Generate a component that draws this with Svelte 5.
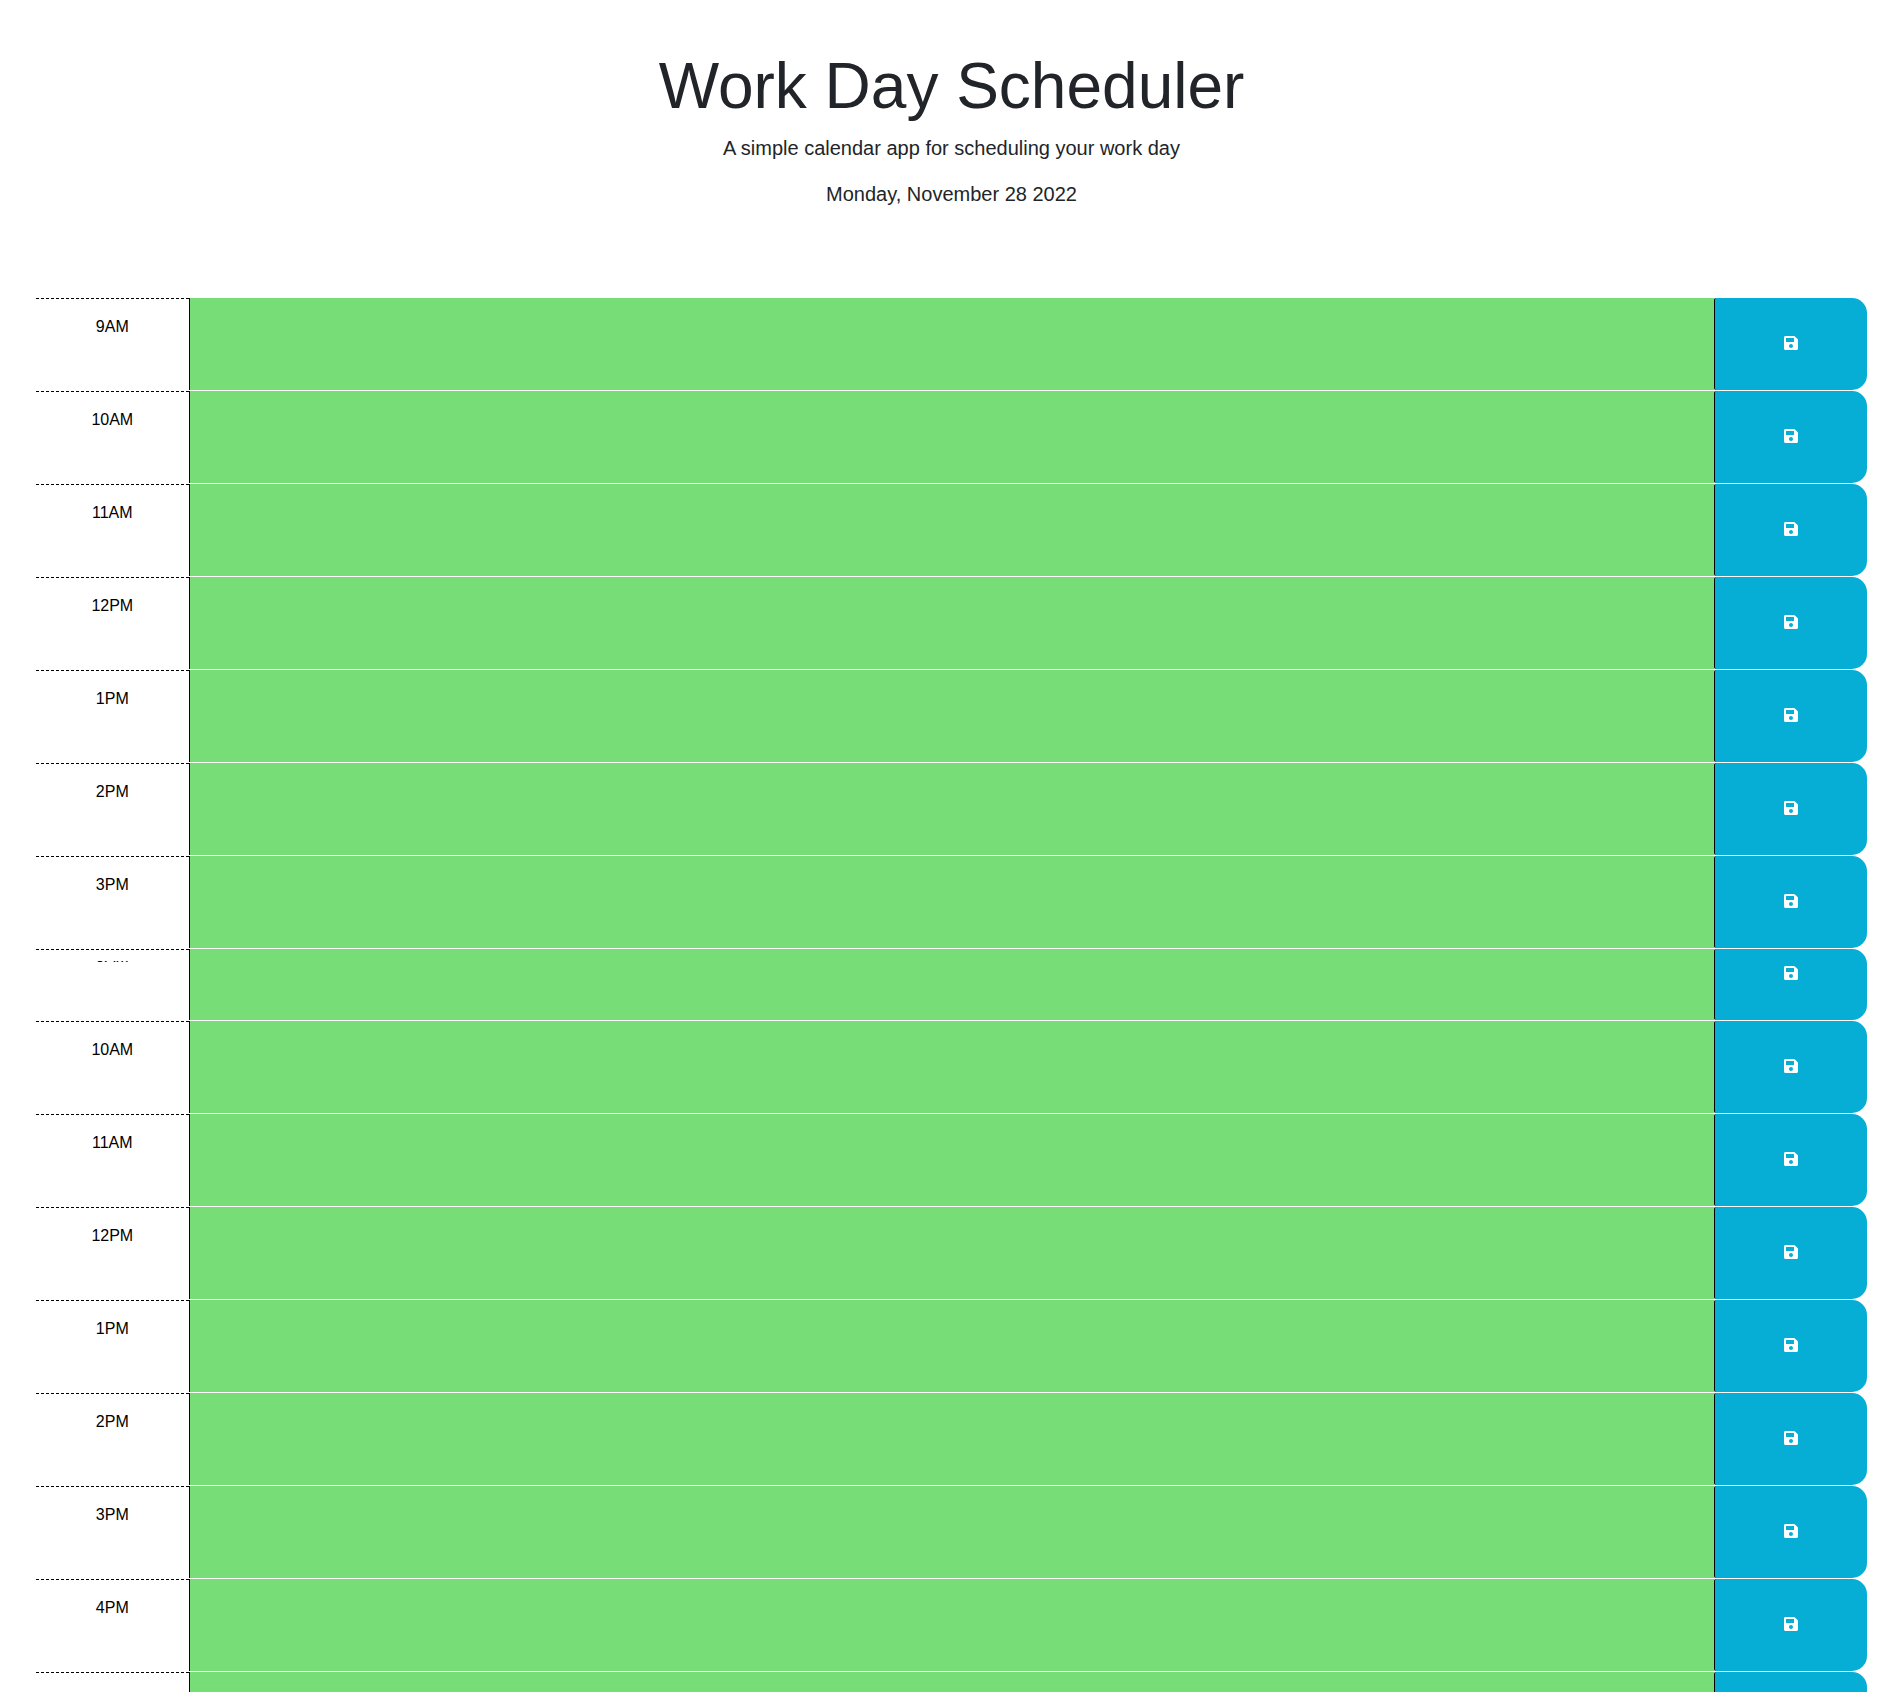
<script>
  const hours = ['9AM', '10AM', '11AM', '12PM', '1PM', '2PM', '3PM'];
  let blocks = $state([
    ...hours.map((label) => ({ label, short: false, text: '' })),
    { label: '9AM', short: true, text: '' },
    ...[...hours.slice(1), '4PM', '5PM'].map((label) => ({ label, short: false, text: '' })),
  ]);
</script>

<header>
  <h1>Work Day Scheduler</h1>
  <p>A simple calendar app for scheduling your work day</p>
  <p>Monday, November 28 2022</p>
</header>

<main>
  {#each blocks as block, i}
    <div class="row" class:short={block.short}>
      <label class="hour" for="slot-{i}"><span>{block.label}</span></label>
      <textarea id="slot-{i}" bind:value={block.text}></textarea>
      <button type="button" aria-label="Save">
        <svg viewBox="0 0 448 448" aria-hidden="true">
          <path
            d="M433.941 97.941l-83.882-83.882A48 48 0 0 0 316.118 0H48C21.49 0 0 21.49 0 48v352c0 26.51 21.49 48 48 48h352c26.51 0 48-21.49 48-48V131.882a48 48 0 0 0-14.059-33.941zM224 384c-35.346 0-64-28.654-64-64s28.654-64 64-64 64 28.654 64 64-28.654 64-64 64zm96-304.52V180c0 6.627-5.373 12-12 12H76c-6.627 0-12-5.373-12-12V76c0-6.627 5.373-12 12-12h228.52c3.183 0 6.235 1.264 8.485 3.515l3.48 3.48A11.996 11.996 0 0 1 320 79.48z"
          />
        </svg>
      </button>
    </div>
  {/each}
</main>

<style>
  :global(body) {
    background: #fff;
    color: #212529;
    font: 16px/24px 'Liberation Sans', Arial, sans-serif;
  }
  :global(#app) {
    height: 100vh;
    overflow: hidden;
  }
  header {
    padding: 48px 36px;
    margin-bottom: 25px;
    text-align: center;
  }
  h1 {
    margin: 0 0 8px;
    font-size: 64px;
    font-weight: 400;
    line-height: 77px;
  }
  p {
    margin: 0 0 16px;
    font-size: 20px;
    line-height: 30px;
  }
  main {
    padding: 0 36px;
  }
  .row {
    display: grid;
    grid-template-columns: 1fr 10fr 1fr;
    height: 92px;
    margin-bottom: 1px;
  }
  .hour {
    box-sizing: border-box;
    border-top: 1px dashed #000;
    padding-top: 16px;
    color: #000;
    text-align: center;
  }
  textarea {
    box-sizing: border-box;
    width: 100%;
    height: 100%;
    margin: 0;
    padding: 8px;
    border: 0;
    border-left: 1px solid #000;
    border-radius: 0;
    outline: 0;
    resize: none;
    background: #77dd77;
    color: #fff;
    font: inherit;
  }
  button {
    display: flex;
    align-items: center;
    justify-content: center;
    padding: 0 0 2px;
    border: 0;
    border-left: 1px solid #000;
    border-radius: 2px 15px 15px 2px;
    background: #06aed5;
    color: #fff;
    cursor: pointer;
  }
  svg {
    width: 14px;
    height: 14px;
    fill: currentColor;
  }
  .short {
    height: 71px;
  }
  .short .hour {
    padding-top: 11px;
  }
  /* Only the foot of the label shows in the shortened row. */
  .short .hour span {
    display: flex;
    align-items: flex-end;
    justify-content: center;
    height: 1px;
    line-height: 11px;
    overflow: hidden;
  }
  .short button {
    padding-bottom: 23px;
  }
</style>
